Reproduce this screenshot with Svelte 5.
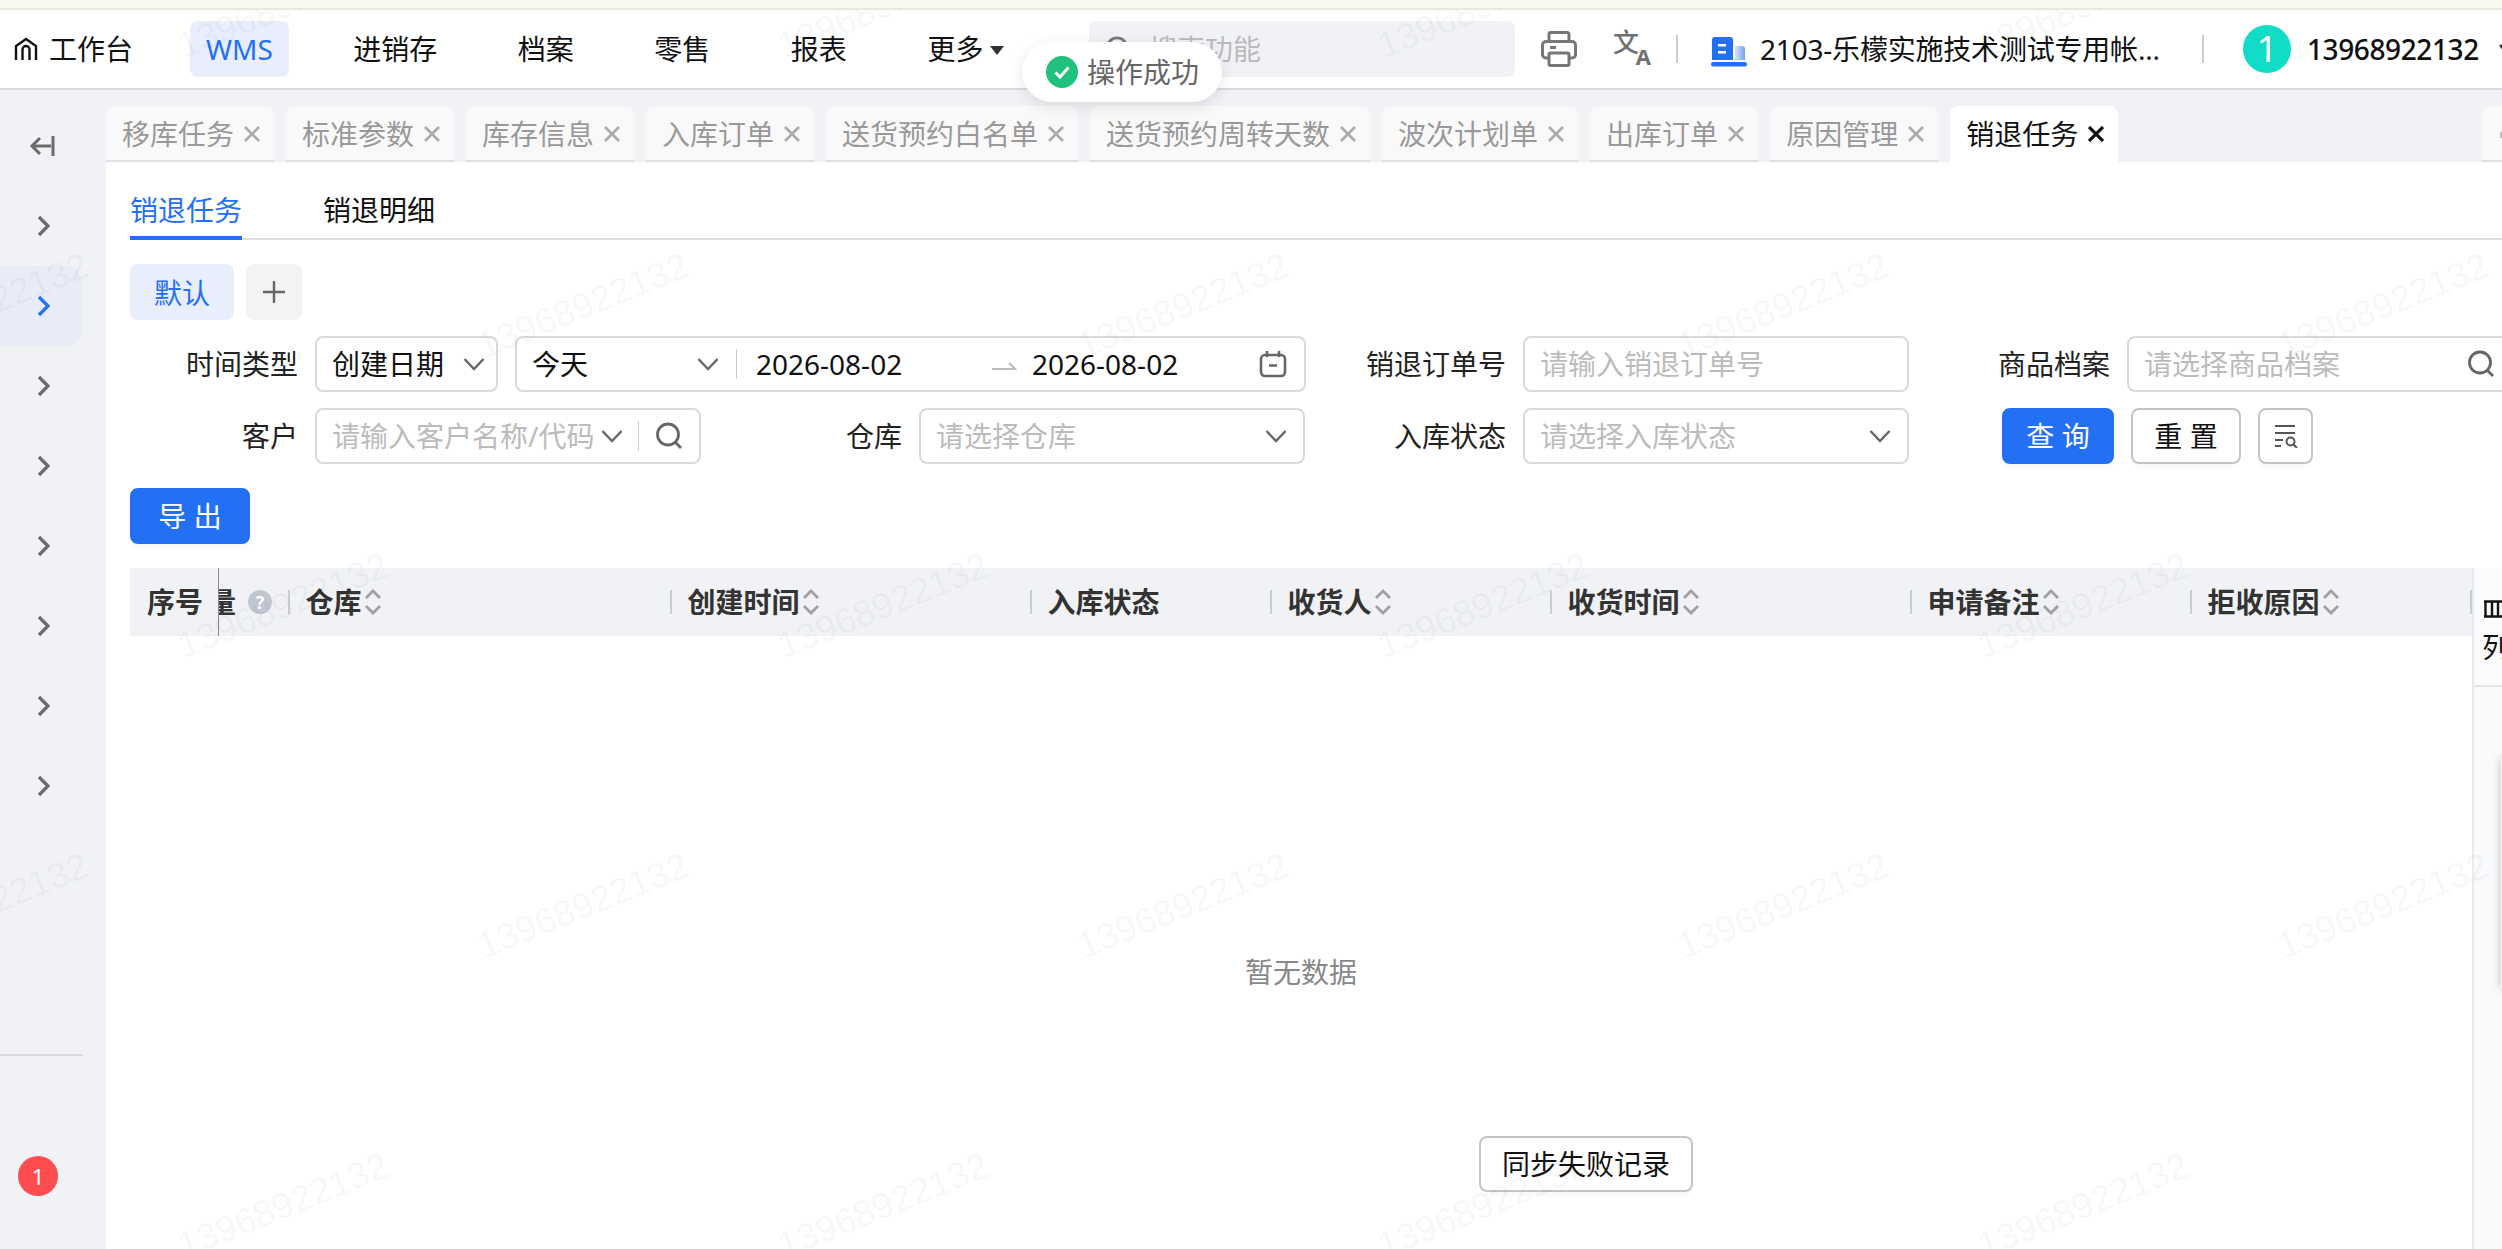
<script>
  // Tabs along the top of the work area
  const tabs = ['移库任务', '标准参数', '库存信息', '入库订单', '送货预约白名单', '送货预约周转天数', '波次计划单', '出库订单', '原因管理', '销退任务'];
  const activeTab = '销退任务';

  const navItems = ['WMS', '进销存', '档案', '零售', '报表'];

  // Sidebar groups, only the chevrons are visible when collapsed
  const sideItems = [0, 1, 2, 3, 4, 5, 6, 7];
  const activeSide = 1;

  const columns = [
    { label: '仓库', sort: true },
    { label: '创建时间', sort: true },
    { label: '入库状态', sort: false },
    { label: '收货人', sort: true },
    { label: '收货时间', sort: true },
    { label: '申请备注', sort: true },
    { label: '拒收原因', sort: true },
  ];

  // Watermark is a staggered grid, 600 apart with every other row shifted by 300
  const marks = [];
  for (let row = 0; row < 5; row++) {
    for (let col = -1; col < 5; col++) {
      marks.push({ x: col * 600 + (row % 2 ? 583 : 283), y: row * 300 + 6 });
    }
  }
</script>

{#snippet chevronDown()}
  <svg class="chev" width="22" height="14" viewBox="0 0 22 14"><path d="M1.500 2 L11 12 L20.500 2" /></svg>
{/snippet}

{#snippet searchIcon()}
  <svg class="search-icon" width="28" height="28" viewBox="0 0 28 28"><circle cx="13" cy="12.5" r="10.5" /><path d="M20 20 L26 26" /></svg>
{/snippet}

{#snippet sorter()}
  <svg class="sorter" width="16" height="26" viewBox="0 0 16 26"><path d="M1 9 L8 2 L15 9 M1 17 L8 24 L15 17" /></svg>
{/snippet}

<div class="page">
  <div class="top-strip"></div>

  <header class="header">
    <div class="home">
      <svg width="24" height="24" viewBox="0 0 24 24" fill="none" stroke="#111" stroke-width="2.4"><path d="M2 23 V9 L12 2 L22 9 V23" /><path d="M8.5 23 V12.5 a3.5 3.5 0 0 1 7 0 V23" /></svg>
      <span>工作台</span>
    </div>
    <nav class="nav">
      {#each navItems as item, i}
        <span class="nav-item" class:active={i === 0}>{item}</span>
      {/each}
      <span class="nav-item">更多<i class="caret"></i></span>
    </nav>
    <div class="global-search">
      <svg width="26" height="26" viewBox="0 0 28 28" fill="none" stroke="#777" stroke-width="3"><circle cx="13" cy="12.5" r="10.5" /><path d="M20 20 L26 26" /></svg>
      <span>搜索功能</span>
    </div>
    <svg class="print" width="36" height="36" viewBox="0 0 36 36" fill="none" stroke="#777" stroke-width="3"><path d="M8 11 V3 a1.5 1.5 0 0 1 1.5 -1.5 H26.500 a1.500 1.500 0 0 1 1.500 1.500 V11" /><path d="M8 27 H5 a3.500 3.500 0 0 1 -3.500 -3.500 V14 a3.500 3.500 0 0 1 3.500 -3.500 H31 a3.500 3.500 0 0 1 3.500 3.500 V23.500 a3.500 3.500 0 0 1 -3.500 3.500 H28" /><rect x="8" y="22" width="20" height="12.500" rx="1.500" /><path d="M9 16.500 H15" /></svg>
    <div class="translate"><span class="zh">文</span><span class="en">A</span></div>
    <i class="head-divider first"></i>
    <svg class="building" width="36" height="30" viewBox="0 0 36 30"><defs><linearGradient id="tower" x1="0" x2="1" y1="0" y2="0"><stop offset="0" stop-color="#dbe6fd" /><stop offset="1" stop-color="#6f9ff8" /></linearGradient></defs><path d="M1 3 a3 3 0 0 1 3 -3 H19 a3 3 0 0 1 3 3 V23 H1 Z" fill="#2470f5" /><rect x="7" y="7" width="8" height="2.500" fill="#fff" /><rect x="7" y="14" width="8" height="2.500" fill="#fff" /><path d="M24 9 H31 a3 3 0 0 1 3 3 V23 H24 Z" fill="url(#tower)" /><rect x="0" y="25" width="36" height="4.500" rx="2.200" fill="#2470f5" /></svg>
    <span class="company">2103-乐檬实施技术测试专用帐...</span>
    <i class="head-divider second"></i>
    <span class="avatar">1</span>
    <span class="phone">13968922132</span>
    <svg class="user-chev" width="14" height="10" viewBox="0 0 14 10"><path d="M1 1 L7 8 L13 1" /></svg>
  </header>

  <div class="body">
    <aside class="sidebar">
      <div class="side-back">
        <svg width="26" height="22" viewBox="0 0 26 22" fill="none" stroke="#6a6a6a" stroke-width="3"><path d="M3 11 H22" /><path d="M11 3 L3 11 L11 19" /><path d="M24 1 V21" /></svg>
      </div>
      {#each sideItems as item}
        <div class="side-item" class:active={item === activeSide}>
          <svg width="14" height="22" viewBox="0 0 14 22" fill="none" stroke-width="3.200"><path d="M2 2 L11 11 L2 20" /></svg>
        </div>
      {/each}
      <div class="side-divider"></div>
      <div class="side-badge">1</div>
    </aside>

    <main class="main">
      <div class="tab-bar">
        {#each tabs as tab}
          <div class="tab" class:active={tab === activeTab}>
            <span>{tab}</span>
            <svg width="16" height="16" viewBox="0 0 16 16"><path d="M1 1 L15 15 M15 1 L1 15" /></svg>
          </div>
        {/each}
        <div class="tab-stub"><i></i></div>
      </div>

      <div class="content">
        <div class="subtabs">
          <span class="subtab active">销退任务</span>
          <span class="subtab">销退明细</span>
        </div>

        <div class="views">
          <span class="view-chip">默认</span>
          <span class="view-add">
            <svg width="24" height="24" viewBox="0 0 24 24" stroke="#666" stroke-width="2.400"><path d="M12 1 V23 M1 12 H23" /></svg>
          </span>
        </div>

        <div class="form">
          <div class="cell wide">
            <label>时间类型</label>
            <div class="control type-select"><span>创建日期</span>{@render chevronDown()}</div>
            <div class="control range">
              <span class="range-type">今天</span>
              {@render chevronDown()}
              <i class="inner-sep"></i>
              <span class="date">2026-08-02</span>
              <svg class="range-arrow" width="26" height="10" viewBox="0 0 26 10" fill="none" stroke="#bbb" stroke-width="2"><path d="M1 8 H24 L18 2" /></svg>
              <span class="date">2026-08-02</span>
              <svg class="calendar" width="28" height="28" viewBox="0 0 28 28" fill="none" stroke="#666" stroke-width="2.600"><rect x="2" y="5" width="24" height="21" rx="4" /><path d="M8 1 V7 M20 1 V7 M10 15.500 H18" /></svg>
            </div>
          </div>
          <div class="cell">
            <label>销退订单号</label>
            <div class="control field"><span class="ph">请输入销退订单号</span></div>
          </div>
          <div class="cell">
            <label>商品档案</label>
            <div class="control field"><span class="ph">请选择商品档案</span>{@render searchIcon()}</div>
          </div>

          <div class="cell">
            <label>客户</label>
            <div class="control field customer">
              <span class="ph">请输入客户名称/代码</span>
              {@render chevronDown()}
              <i class="inner-sep"></i>
              {@render searchIcon()}
            </div>
          </div>
          <div class="cell">
            <label>仓库</label>
            <div class="control field"><span class="ph">请选择仓库</span>{@render chevronDown()}</div>
          </div>
          <div class="cell">
            <label>入库状态</label>
            <div class="control field"><span class="ph">请选择入库状态</span>{@render chevronDown()}</div>
          </div>
          <div class="actions">
            <button class="btn primary">查 询</button>
            <button class="btn">重 置</button>
            <button class="btn icon-btn" aria-label="筛选">
              <svg width="24" height="24" viewBox="0 0 24 24" fill="none" stroke="#555" stroke-width="2"><path d="M1 2 H21 M1 9 H21 M1 16 H9 M1 22 H7" /><circle cx="16.500" cy="17.500" r="4" /><path d="M19.500 20.500 L23 24" /></svg>
            </button>
          </div>
        </div>

        <div class="toolbar">
          <button class="btn primary export">导 出</button>
        </div>

        <div class="table-wrap">
          <div class="table">
            <div class="thead">
              <div class="th seq">序号</div>
              <div class="th clipped">
                <span>数量</span>
                <i class="help">?</i>
              </div>
              {#each columns as col}
                <div class="th">
                  <i class="th-sep"></i>
                  <span>{col.label}</span>
                  {#if col.sort}{@render sorter()}{/if}
                </div>
              {/each}
              <div class="th end"><i class="th-sep"></i></div>
            </div>
            <div class="tbody">
              <div class="empty">暂无数据</div>
              <button class="btn sync">同步失败记录</button>
            </div>
          </div>

          <div class="col-panel">
            <div class="col-head">
              <svg width="22" height="18" viewBox="0 0 22 18" fill="none" stroke="#111" stroke-width="2.400"><path d="M0 1.500 H22 M0 16.500 H22 M1.500 1 V17 M8 1 V17 M14 1 V17" /></svg>
              <span>列设置</span>
            </div>
            <div class="drawer-edge"></div>
          </div>
        </div>
      </div>
    </main>
  </div>

  <div class="toast">
    <svg width="32" height="32" viewBox="0 0 32 32"><circle cx="16" cy="16" r="16" fill="#20c17c" /><path d="M9.500 16.500 L14 21 L22.500 11.500" fill="none" stroke="#fff" stroke-width="3" /></svg>
    <span>操作成功</span>
  </div>

  <div class="watermarks">
    {#each marks as m}
      <span class="mark" style="left: {m.x}px; top: {m.y}px">13968922132</span>
    {/each}
  </div>
</div>

<style>
  :global(body) {
    margin: 0;
    background: #fff;
  }

  .page {
    position: relative;
    width: 2502px;
    height: 1249px;
    overflow: hidden;
    display: flex;
    flex-direction: column;
    font-family: 'Noto Sans', 'Noto Sans CJK SC', sans-serif;
    font-size: 28px;
    line-height: 40px;
    color: #111;
  }

  .top-strip {
    height: 8px;
    flex: none;
    background: #f7faf0;
    border-bottom: 2px solid #e6e9dc;
  }

  /* Header */
  .header {
    height: 78px;
    flex: none;
    display: flex;
    align-items: center;
    background: #fff;
    border-bottom: 2px solid #d9d9d9;
    padding-left: 14px;
  }

  .home {
    width: 176px;
    flex: none;
    display: flex;
    align-items: center;
    gap: 11px;
  }

  .nav {
    width: 899px;
    flex: none;
    display: flex;
    align-items: center;
    gap: 48.500px;
  }

  .nav-item {
    height: 56px;
    padding: 0 16px;
    display: flex;
    align-items: center;
    border-radius: 8px;
    white-space: nowrap;
  }

  .nav-item.active {
    background: #e8eefc;
    color: #2470f5;
  }

  .caret {
    margin-left: 7px;
    margin-top: 2px;
    border-left: 7px solid transparent;
    border-right: 7px solid transparent;
    border-top: 9px solid #333;
  }

  .global-search {
    width: 426px;
    height: 56px;
    flex: none;
    box-sizing: border-box;
    display: flex;
    align-items: center;
    gap: 18px;
    padding-left: 16px;
    border-radius: 8px;
    background: #f0f2f5;
    color: #bbb;
  }

  .print {
    flex: none;
    margin-left: 26px;
  }

  .translate {
    position: relative;
    width: 36px;
    height: 34px;
    flex: none;
    margin-left: 37px;
    color: #707070;
  }

  .translate .zh {
    position: absolute;
    left: -1px;
    top: -5px;
    font-size: 26px;
    line-height: 30px;
    font-weight: 500;
  }

  .translate .en {
    position: absolute;
    right: -1px;
    bottom: -3px;
    font-size: 22px;
    line-height: 26px;
    font-weight: 700;
  }

  .head-divider {
    width: 2px;
    height: 28px;
    flex: none;
    background: #ccc;
  }

  .head-divider.first {
    margin-left: 26px;
  }

  .head-divider.second {
    margin-left: 44px;
  }

  .building {
    flex: none;
    margin-left: 33px;
    margin-top: 6px;
  }

  .company {
    flex: none;
    width: 398px;
    margin-left: 13px;
    white-space: nowrap;
    letter-spacing: -0.2px;
  }

  .avatar {
    width: 48px;
    height: 48px;
    flex: none;
    margin-left: 39px;
    border-radius: 50%;
    background: #10dcc8;
    color: #fff;
    font-size: 36px;
    line-height: 48px;
    text-align: center;
  }

  .phone {
    flex: none;
    margin-left: 16px;
    font-weight: 500;
    letter-spacing: -0.4px;
  }

  .user-chev {
    flex: none;
    margin-left: 20px;
    fill: none;
    stroke: #333;
    stroke-width: 2.500;
  }

  /* Layout below the header */
  .body {
    flex: 1;
    min-height: 0;
    display: flex;
    background: #f0f2f5;
  }

  .sidebar {
    width: 106px;
    flex: none;
    box-sizing: border-box;
    padding-top: 16px;
    background: #f1f2f5;
  }

  .side-back {
    width: 82px;
    height: 80px;
    display: flex;
    align-items: center;
    padding-left: 29px;
    box-sizing: border-box;
  }

  .side-item {
    width: 82px;
    height: 80px;
    box-sizing: border-box;
    padding-left: 37px;
    display: flex;
    align-items: center;
    border-radius: 0 16px 16px 0;
    stroke: #6a6a6a;
  }

  .side-item.active {
    background: #e8ecf6;
    stroke: #2470f5;
  }

  .side-divider {
    width: 83px;
    height: 2px;
    margin-top: 228px;
    background: #d9d9d9;
  }

  .side-badge {
    width: 40px;
    height: 40px;
    margin: 100px 0 0 18px;
    border-radius: 50%;
    background: #ff4d4f;
    color: #fff;
    font-size: 22px;
    line-height: 40px;
    text-align: center;
  }

  .main {
    flex: 1;
    min-width: 0;
    display: flex;
    flex-direction: column;
  }

  /* Page tabs */
  .tab-bar {
    height: 56px;
    flex: none;
    display: flex;
    gap: 12px;
    padding-top: 16px;
  }

  .tab {
    height: 56px;
    flex: none;
    box-sizing: border-box;
    display: flex;
    align-items: center;
    gap: 10px;
    padding: 2px 14px 0 16px;
    background: #f9f9fa;
    border-bottom: 2px solid #e0e0e0;
    border-radius: 8px 8px 0 0;
    color: #999;
    white-space: nowrap;
    stroke: #aaa;
    stroke-width: 2.600;
  }

  .tab.active {
    background: #fff;
    border-bottom-color: #fff;
    color: #111;
    stroke: #111;
    stroke-width: 3.200;
  }

  .tab-stub {
    width: 20px;
    height: 56px;
    flex: none;
    box-sizing: border-box;
    margin-left: auto;
    padding: 26px 0 0 18px;
    background: #f9f9fa;
    border-bottom: 2px solid #e0e0e0;
    border-radius: 8px 0 0 0;
  }

  .tab-stub i {
    display: block;
    width: 2px;
    height: 6px;
    background: #bbb;
  }

  .content {
    flex: 1;
    min-height: 0;
    display: flex;
    flex-direction: column;
    background: #fff;
  }

  /* Inner tabs */
  .subtabs {
    height: 76px;
    flex: none;
    margin-left: 24px;
    display: flex;
    gap: 81px;
    border-bottom: 2px solid #ddd;
  }

  .subtab {
    height: 78px;
    box-sizing: border-box;
    padding-top: 28px;
    margin-bottom: -2px;
    border-bottom: 4px solid transparent;
  }

  .subtab.active {
    color: #2470f5;
    border-bottom-color: #2470f5;
  }

  .views {
    display: flex;
    gap: 12px;
    margin: 24px 0 0 24px;
    flex: none;
  }

  .view-chip {
    width: 104px;
    height: 56px;
    padding-top: 1px;
    box-sizing: border-box;
    display: flex;
    align-items: center;
    justify-content: center;
    border-radius: 8px;
    background: #e8eefc;
    color: #2470f5;
  }

  .view-add {
    width: 56px;
    height: 56px;
    display: flex;
    align-items: center;
    justify-content: center;
    border-radius: 8px;
    background: #f2f3f5;
  }

  /* Search form */
  .form {
    flex: none;
    display: grid;
    grid-template-columns: repeat(4, 604px);
    row-gap: 16px;
    margin: 16px 0 0 5px;
  }

  .cell {
    display: flex;
    align-items: center;
    gap: 17px;
    min-width: 0;
  }

  .cell.wide {
    grid-column: span 2;
  }

  .cell label {
    width: 187px;
    flex: none;
    text-align: right;
    color: #222;
    white-space: nowrap;
  }

  .control {
    height: 56px;
    box-sizing: border-box;
    flex: none;
    display: flex;
    align-items: center;
    border: 2px solid #d9d9d9;
    border-radius: 8px;
    background: #fff;
    padding: 0 16px 0 15px;
    white-space: nowrap;
  }

  .field {
    width: 386px;
    justify-content: space-between;
  }

  .type-select {
    width: 183px;
    justify-content: space-between;
    padding-right: 11px;
  }

  .range {
    width: 791px;
  }

  .range-type {
    width: 165px;
    flex: none;
  }

  .inner-sep {
    width: 1px;
    height: 30px;
    flex: none;
    background: #ccc;
  }

  .range .inner-sep {
    margin: 0 19px 0 17px;
  }

  .date {
    flex: none;
    width: 144px;
  }

  .range-arrow {
    flex: none;
    margin: 4px 15px 0 91px;
  }

  .calendar {
    flex: none;
    margin-left: auto;
    margin-right: 1px;
  }

  .customer {
    justify-content: flex-start;
    padding-right: 14px;
  }

  .customer .ph {
    width: 264px;
    overflow: hidden;
    flex: none;
  }

  .customer .inner-sep {
    margin: 0 16px 0 17px;
  }

  .customer .chev {
    margin-left: 5px;
    margin-right: -2px;
  }

  .ph {
    color: #bbb;
  }

  .chev {
    flex: none;
    fill: none;
    stroke: #666;
    stroke-width: 2.400;
  }

  .search-icon {
    flex: none;
    fill: none;
    stroke: #666;
    stroke-width: 2.800;
  }

  .actions {
    display: flex;
    gap: 17px;
    padding-left: 79px;
  }

  .btn {
    height: 56px;
    box-sizing: border-box;
    padding: 0;
    border: 2px solid #c4c4c4;
    border-radius: 8px;
    background: #fff;
    color: #111;
    font: inherit;
    box-shadow: 0 4px 0 rgba(0, 0, 0, 0.02);
  }

  .btn.primary {
    width: 112px;
    background: #2470f5;
    border-color: #2470f5;
    color: #fff;
  }

  .actions .btn {
    width: 110px;
    flex: none;
  }

  .actions .btn.primary {
    width: 112px;
  }

  .actions .icon-btn {
    width: 55px;
    display: flex;
    align-items: center;
    justify-content: center;
  }

  .toolbar {
    flex: none;
    margin: 24px 0 0 24px;
  }

  .btn.export {
    width: 120px;
    display: block;
  }

  /* Table */
  .table-wrap {
    flex: 1;
    min-height: 0;
    margin: 24px 0 0 24px;
    display: flex;
  }

  .table {
    width: 2342px;
    flex: none;
    display: flex;
    flex-direction: column;
  }

  .thead {
    height: 68px;
    flex: none;
    display: grid;
    grid-template-columns: 89px 69px 382px 360px 240px 280px 360px 280px 280px 2px;
    background: #f0f2f5;
    font-weight: 700;
    color: #333;
  }

  .th {
    display: flex;
    align-items: center;
    min-width: 0;
    white-space: nowrap;
  }

  .th-sep {
    width: 2px;
    height: 24px;
    flex: none;
    margin-right: 15.500px;
    background: #c9cdd4;
  }

  .th.seq {
    padding-left: 17px;
    border-right: 1px solid #8a8a8a;
  }

  .th.clipped {
    justify-content: flex-end;
    gap: 12px;
    padding-right: 16px;
    overflow: hidden;
  }

  .th.end {
    overflow: visible;
  }

  .help {
    width: 24px;
    height: 24px;
    flex: none;
    border-radius: 50%;
    background: #c0c6d2;
    color: #fff;
    font-size: 18px;
    font-style: normal;
    line-height: 24px;
    text-align: center;
  }

  .sorter {
    flex: none;
    margin-left: 3px;
    fill: none;
    stroke: #a0a0a0;
    stroke-width: 2.800;
  }

  .tbody {
    flex: 1;
    min-height: 0;
    display: flex;
    flex-direction: column;
    padding-top: 316px;
  }

  .empty {
    text-align: center;
    color: #888;
  }

  .btn.sync {
    width: 214px;
    flex: none;
    margin: 144px 0 0 1349px;
  }

  .col-panel {
    position: relative;
    flex: 1;
    min-width: 0;
    overflow: hidden;
    border-left: 2px solid #e8eaed;
    background: #f9fafc;
  }

  .col-head {
    height: 119px;
    box-sizing: border-box;
    padding: 32px 0 0 8px;
    border-bottom: 2px solid #e6e6e6;
    background: #fafbfc;
    white-space: nowrap;
    line-height: 38px;
  }

  .col-head svg {
    display: block;
    margin: 0 0 10px 2px;
  }

  .drawer-edge {
    position: absolute;
    left: 27px;
    top: 190px;
    width: 20px;
    height: 230px;
    box-shadow: 0 0 10px rgba(0, 0, 0, 0.25);
  }

  /* Floating message */
  .toast {
    position: absolute;
    left: 1022px;
    top: 42px;
    width: 200px;
    height: 60px;
    box-sizing: border-box;
    display: flex;
    align-items: center;
    gap: 9px;
    padding-left: 24px;
    border-radius: 30px;
    background: #fff;
    color: #666;
    box-shadow: 0 4px 16px rgba(0, 0, 0, 0.1);
  }

  /* Watermark overlay */
  .watermarks {
    position: absolute;
    inset: 10px 0 0 0;
    overflow: hidden;
    pointer-events: none;
  }

  .mark {
    position: absolute;
    transform: translate(-50%, calc(-50% - 10px)) rotate(-22deg);
    font-family: 'Liberation Sans', sans-serif;
    font-size: 36.500px;
    line-height: 40px;
    color: rgba(0, 0, 0, 0.04);
    white-space: nowrap;
  }
</style>
